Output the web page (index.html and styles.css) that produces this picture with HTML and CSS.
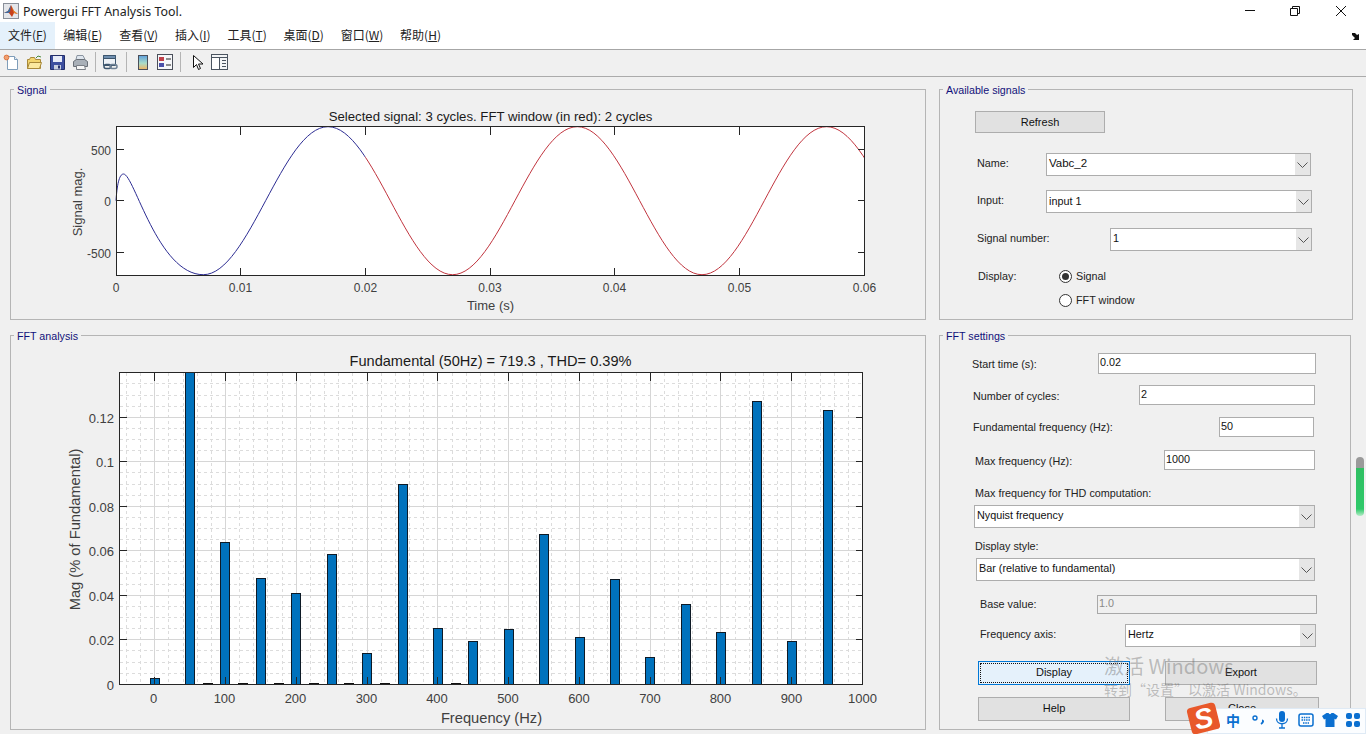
FILE: index.html
```html
<!DOCTYPE html>
<html lang="en">
<head>
<meta charset="utf-8">
<title>Powergui FFT Analysis Tool.</title>
<link rel="stylesheet" href="styles.css">
</head>
<body>
<div class="app">
  <header class="titlebar">
    <svg class="app-icon" width="16" height="16" viewBox="0 0 16 16"><rect x=".5" y=".5" width="15" height="15" fill="#e4e6ea" stroke="#8a8f99"/><path d="M1 10l4-2 3-6 3 6 4 3-4-1-2 4-3-4z" fill="#c8401c"/><path d="M1 10l4-2 3-6-1 7-2 1z" fill="#3a6ea5"/><path d="M8 2l3 6 4 3-4-1z" fill="#e88a2a"/></svg>
    <span class="title-text">Powergui FFT Analysis Tool.</span>
    <div class="win-buttons">
      <span class="win-btn win-min"><svg width="12" height="12" viewBox="0 0 12 12"><path d="M1 5.500h10" stroke="#111" fill="none"/></svg></span>
      <span class="win-btn"><svg width="12" height="12" viewBox="0 0 12 12"><path d="M1.500 3.500h7v7h-7zM3.500 3.500v-2h7v7h-2" stroke="#111" fill="none"/></svg></span>
      <span class="win-btn"><svg width="12" height="12" viewBox="0 0 12 12"><path d="M1 1l10 10M11 1L1 11" stroke="#111" fill="none"/></svg></span>
    </div>
  </header>

  <nav class="menubar">
    <span class="menu-item active">文件(<u>F</u>)</span>
    <span class="menu-item">编辑(<u>E</u>)</span>
    <span class="menu-item">查看(<u>V</u>)</span>
    <span class="menu-item">插入(<u>I</u>)</span>
    <span class="menu-item">工具(<u>T</u>)</span>
    <span class="menu-item">桌面(<u>D</u>)</span>
    <span class="menu-item">窗口(<u>W</u>)</span>
    <span class="menu-item">帮助(<u>H</u>)</span>
    <svg class="dock-arrow" width="9" height="8" viewBox="0 0 9 8"><path d="M0 0l3 0 2 2 2-1v6H1l2-2-3-3z" fill="#111"/></svg>
  </nav>

  <div class="toolbar">
    <span class="tool"><svg width="17" height="17" viewBox="0 0 17 17"><path d="M4.500 2.500h7l3 3v10h-10z" fill="#fff" stroke="#7f9db9"/><path d="M11.500 2.500v3h3" fill="#e8eef5" stroke="#7f9db9"/><circle cx="3.500" cy="3.500" r="2.400" fill="#f0a070" stroke="#d9652a" stroke-width=".8"/></svg></span>
    <span class="tool"><svg width="17" height="17" viewBox="0 0 17 17"><path d="M1.500 14.500v-9h2l1-2h4l1 2h5v9z" fill="#f3d56e" stroke="#a8893a"/><path d="M1.500 14.500l2-6h12l-2 6z" fill="#fbe9a0" stroke="#a8893a"/><path d="M10 4l2-2 3 1" fill="none" stroke="#4a8a3a"/></svg></span>
    <span class="tool"><svg width="17" height="17" viewBox="0 0 17 17"><path d="M1.500 1.500h14v14h-14z" fill="#3d4f9f" stroke="#232e6a"/><rect x="4" y="2" width="9" height="6" fill="#e8ecf8"/><rect x="5" y="11" width="7" height="4.500" fill="#c9cfdf"/><rect x="9" y="11.500" width="2" height="3" fill="#232e6a"/></svg></span>
    <span class="tool"><svg width="17" height="17" viewBox="0 0 17 17"><path d="M5 1.500h6l2 4H4z" fill="#dfe6ee" stroke="#8a94a0"/><path d="M1.500 7.500l3-2h8l3 2v5h-14z" fill="#a9b0b8" stroke="#6a7078"/><path d="M4.500 11.500h8l1 4h-9z" fill="#f6f6f6" stroke="#7a7f86"/></svg></span>
    <span class="tool-sep"></span>
    <span class="tool tool-link"><svg width="17" height="17" viewBox="0 0 17 17"><path d="M1.500 1.500h12v10h-12z" fill="#eef2f7" stroke="#3d566e"/><path d="M1.500 1.500h12v3h-12z" fill="#6f8fb0" stroke="#3d566e"/><rect x="2" y="10.500" width="7" height="4" rx="2" fill="none" stroke="#3d566e" stroke-width="1.500"/><rect x="8" y="10.500" width="7" height="4" rx="2" fill="none" stroke="#6f8295" stroke-width="1.500"/></svg></span>
    <span class="tool-sep sep-wide"></span>
    <span class="tool tool-colorbar"><svg width="12" height="17" viewBox="0 0 12 17"><defs><linearGradient id="cbar" x1="0" y1="0" x2="0" y2="1"><stop offset="0" stop-color="#5f9fdc"/><stop offset=".55" stop-color="#a9dcc8"/><stop offset="1" stop-color="#f2b35e"/></linearGradient></defs><rect x="1.500" y="1.500" width="9" height="14" fill="url(#cbar)" stroke="#4a4f5a"/></svg></span>
    <span class="tool"><svg width="16" height="16" viewBox="0 0 16 16"><rect x=".5" y=".5" width="15" height="15" fill="#f6f7f9" stroke="#4a4f5a"/><rect x="2" y="3" width="5" height="4" fill="#c0404a"/><rect x="2" y="9" width="5" height="4" fill="#4a50a8"/><path d="M9 5h5M9 11h5" stroke="#222"/></svg></span>
    <span class="tool-sep sep-end"></span>
    <span class="tool tool-cursor"><svg width="12" height="17" viewBox="0 0 12 17"><path d="M1.500 1.500v12l3-3 2 5 2-1-2-4.500h4.500z" fill="#fff" stroke="#111"/></svg></span>
    <span class="tool"><svg width="17" height="17" viewBox="0 0 17 17"><rect x=".5" y=".5" width="16" height="15" fill="#f3f5f7" stroke="#4a5460"/><path d="M.5 3.500h16" stroke="#4a5460"/><rect x="1" y="4" width="7" height="11" fill="#fff"/><path d="M8.500 3.500v12M11 6.500h4M11 9.500h4M11 12.500h4" stroke="#4a5460"/></svg></span>
  </div>

  <main class="workspace">
    <section class="panel panel-signal">
      <span class="panel-label">Signal</span>
      <svg class="plot" viewBox="11 90 914 229" width="914" height="229">
        <defs>
          <path id="wave" d="M116 200.700C117 186 119 174 123.500 174C134 174 158 274.700 203.300 274.700C248.700 274.700 282.600 126.700 328 126.700C373.400 126.700 407.200 274.700 452.600 274.700C498 274.700 531.900 126.700 577.300 126.700C622.700 126.700 656.600 274.700 702 274.700C747.400 274.700 781.200 126.700 826.600 126.700C872 126.700 905.900 274.700 951.300 274.700" fill="none"/>
          <clipPath id="clip-blue"><rect x="110" y="120" width="255.300" height="160"/></clipPath>
          <clipPath id="clip-red"><rect x="365.300" y="120" width="499" height="160"/></clipPath>
        </defs>
        <rect class="axes-bg" x="116.500" y="126.500" width="748" height="149"/>
        <use href="#wave" class="line-blue" clip-path="url(#clip-blue)"/>
        <use href="#wave" class="line-red" clip-path="url(#clip-red)"/>
        <rect class="axes-box" x="116.500" y="126.500" width="748" height="149"/>
        <path class="ticks" d="M116.500 149.500h7M116.500 200.500h7M116.500 252.500h7M864.500 149.500h-7M864.500 200.500h-7M864.500 252.500h-7M240.500 126.500v8M365.500 126.500v8M490.500 126.500v8M614.500 126.500v8M739.500 126.500v8M240.500 275.500v-8M365.500 275.500v-8M490.500 275.500v-8M614.500 275.500v-8M739.500 275.500v-8"/>
        <text class="tick-s end" x="111" y="155">500</text>
        <text class="tick-s end" x="111" y="206">0</text>
        <text class="tick-s end" x="111" y="258">-500</text>
        <text class="tick-s mid" x="116" y="292">0</text>
        <text class="tick-s mid" x="240.500" y="292">0.01</text>
        <text class="tick-s mid" x="365.500" y="292">0.02</text>
        <text class="tick-s mid" x="490" y="292">0.03</text>
        <text class="tick-s mid" x="614.500" y="292">0.04</text>
        <text class="tick-s mid" x="739.500" y="292">0.05</text>
        <text class="tick-s mid" x="864.500" y="292">0.06</text>
        <text class="plot-title-s mid" x="490.500" y="121">Selected signal: 3 cycles. FFT window (in red): 2 cycles</text>
        <text class="label-s mid" x="490.500" y="310">Time (s)</text>
        <text class="label-s mid" transform="translate(82 202) rotate(-90)">Signal mag.</text>
      </svg>
    </section>

    <section class="panel panel-avail">
      <span class="panel-label">Available signals</span>
      <button class="btn btn-refresh">Refresh</button>
      <div class="row row-name">
        <span class="lbl lbl-name">Name:</span>
        <div class="combo combo-name"><span class="combo-text big">Vabc_2</span><span class="combo-arrow"><svg width="11" height="6" viewBox="0 0 11 6"><path d="M.5 .5l5 5 5-5" fill="none" stroke="#555"/></svg></span></div>
      </div>
      <div class="row row-input">
        <span class="lbl lbl-name">Input:</span>
        <div class="combo combo-input"><span class="combo-text">input 1</span><span class="combo-arrow"><svg width="11" height="6" viewBox="0 0 11 6"><path d="M.5 .5l5 5 5-5" fill="none" stroke="#555"/></svg></span></div>
      </div>
      <div class="row row-number">
        <span class="lbl lbl-number">Signal number:</span>
        <div class="combo combo-number"><span class="combo-text">1</span><span class="combo-arrow"><svg width="11" height="6" viewBox="0 0 11 6"><path d="M.5 .5l5 5 5-5" fill="none" stroke="#555"/></svg></span></div>
      </div>
      <div class="row row-radio1">
        <span class="lbl lbl-display">Display:</span>
        <span class="radio on"></span><span class="radio-text">Signal</span>
      </div>
      <div class="row row-radio2">
        <span class="radio"></span><span class="radio-text">FFT window</span>
      </div>
    </section>

    <section class="panel panel-fft">
      <span class="panel-label">FFT analysis</span>
      <svg class="plot" viewBox="11 336 914 393" width="914" height="393">
        <rect class="axes-bg" x="119.500" y="372.500" width="743" height="312"/>
        <path class="grid-minor" d="M126.500 373V684M140.500 373V684M168.500 373V684M183.500 373V684M197.500 373V684M211.500 373V684M239.500 373V684M253.500 373V684M267.500 373V684M282.500 373V684M310.500 373V684M324.500 373V684M338.500 373V684M352.500 373V684M381.500 373V684M395.500 373V684M409.500 373V684M423.500 373V684M452.500 373V684M466.500 373V684M480.500 373V684M494.500 373V684M522.500 373V684M536.500 373V684M551.500 373V684M565.500 373V684M593.500 373V684M607.500 373V684M621.500 373V684M636.500 373V684M664.500 373V684M678.500 373V684M692.500 373V684M706.500 373V684M735.500 373V684M749.500 373V684M763.500 373V684M777.500 373V684M805.500 373V684M820.500 373V684M834.500 373V684M848.500 373V684"/>
        <path class="grid-minor" d="M120 673.500H862M120 662.500H862M120 650.500H862M120 628.500H862M120 617.500H862M120 606.500H862M120 584.500H862M120 573.500H862M120 561.500H862M120 539.500H862M120 528.500H862M120 517.500H862M120 495.500H862M120 484.500H862M120 472.500H862M120 450.500H862M120 439.500H862M120 428.500H862M120 406.500H862M120 395.500H862M120 383.500H862"/>
        <path class="grid-major" d="M154.500 373V684M225.500 373V684M296.500 373V684M367.500 373V684M437.500 373V684M508.500 373V684M579.500 373V684M650.500 373V684M720.500 373V684M791.500 373V684M120 639.500H862M120 595.500H862M120 550.500H862M120 506.500H862M120 461.500H862M120 417.500H862"/>
        <rect class="bar" x="150.500" y="678.500" width="9" height="6"/>
        <rect class="bar" x="185.500" y="372" width="9" height="312.500"/>
        <rect class="bar" x="220.500" y="542.500" width="9" height="142"/>
        <rect class="bar" x="256.500" y="578.500" width="9" height="106"/>
        <rect class="bar" x="291.500" y="593.500" width="9" height="91"/>
        <rect class="bar" x="327.500" y="554.500" width="9" height="130"/>
        <rect class="bar" x="362.500" y="653.500" width="9" height="31"/>
        <rect class="bar" x="398.500" y="484.500" width="9" height="200"/>
        <rect class="bar" x="433.500" y="628.500" width="9" height="56"/>
        <rect class="bar" x="468.500" y="641.500" width="9" height="43"/>
        <rect class="bar" x="504.500" y="629.500" width="9" height="55"/>
        <rect class="bar" x="539.500" y="534.500" width="9" height="150"/>
        <rect class="bar" x="575.500" y="637.500" width="9" height="47"/>
        <rect class="bar" x="610.500" y="579.500" width="9" height="105"/>
        <rect class="bar" x="645.500" y="657.500" width="9" height="27"/>
        <rect class="bar" x="681.500" y="604.500" width="9" height="80"/>
        <rect class="bar" x="716.500" y="632.500" width="9" height="52"/>
        <rect class="bar" x="752.500" y="401.500" width="9" height="283"/>
        <rect class="bar" x="787.500" y="641.500" width="9" height="43"/>
        <rect class="bar" x="823.500" y="410.500" width="9" height="274"/>
        <path class="stubs" d="M203 683.500h10M238 683.500h10M274 683.500h10M309 683.500h10M344 683.500h10M380 683.500h10M451 683.500h10"/>
        <rect class="axes-box" x="119.500" y="372.500" width="743" height="312"/>
        <path class="ticks" d="M119.500 639.500h7M119.500 595.500h7M119.500 550.500h7M119.500 506.500h7M119.500 461.500h7M119.500 417.500h7M862.500 639.500h-7M862.500 595.500h-7M862.500 550.500h-7M862.500 506.500h-7M862.500 461.500h-7M862.500 417.500h-7M154.500 372.500v8M225.500 372.500v8M296.500 372.500v8M367.500 372.500v8M437.500 372.500v8M508.500 372.500v8M579.500 372.500v8M650.500 372.500v8M720.500 372.500v8M791.500 372.500v8M154.500 684.500v-8M225.500 684.500v-8M296.500 684.500v-8M367.500 684.500v-8M437.500 684.500v-8M508.500 684.500v-8M579.500 684.500v-8M650.500 684.500v-8M720.500 684.500v-8M791.500 684.500v-8"/>
        <text class="tick-f end" x="114" y="690">0</text>
        <text class="tick-f end" x="114" y="645">0.02</text>
        <text class="tick-f end" x="114" y="601">0.04</text>
        <text class="tick-f end" x="114" y="556">0.06</text>
        <text class="tick-f end" x="114" y="512">0.08</text>
        <text class="tick-f end" x="114" y="467">0.1</text>
        <text class="tick-f end" x="114" y="423">0.12</text>
        <text class="tick-f mid" x="153.500" y="703">0</text>
        <text class="tick-f mid" x="224.500" y="703">100</text>
        <text class="tick-f mid" x="295.500" y="703">200</text>
        <text class="tick-f mid" x="366.500" y="703">300</text>
        <text class="tick-f mid" x="437" y="703">400</text>
        <text class="tick-f mid" x="508" y="703">500</text>
        <text class="tick-f mid" x="579" y="703">600</text>
        <text class="tick-f mid" x="650" y="703">700</text>
        <text class="tick-f mid" x="720.500" y="703">800</text>
        <text class="tick-f mid" x="791.500" y="703">900</text>
        <text class="tick-f mid" x="862.500" y="703">1000</text>
        <text class="plot-title-f mid" x="490.500" y="366">Fundamental (50Hz) = 719.3 , THD= 0.39%</text>
        <text class="label-f mid" x="491.500" y="723">Frequency (Hz)</text>
        <text class="label-f mid" transform="translate(80 529.500) rotate(-90)">Mag (% of Fundamental)</text>
      </svg>
    </section>

    <section class="panel panel-settings">
      <span class="panel-label">FFT settings</span>
      <div class="row row-start">
        <span class="lbl lbl-start">Start time (s):</span>
        <span class="field field-start">0.02</span>
      </div>
      <div class="row row-cycles">
        <span class="lbl lbl-cycles">Number of cycles:</span>
        <span class="field field-cycles">2</span>
      </div>
      <div class="row row-fund">
        <span class="lbl lbl-fund">Fundamental frequency (Hz):</span>
        <span class="field field-fund">50</span>
      </div>
      <div class="row row-maxf">
        <span class="lbl lbl-maxf">Max frequency (Hz):</span>
        <span class="field field-maxf">1000</span>
      </div>
      <div class="lbl lbl-block lbl-thd">Max frequency for THD computation:</div>
      <div class="combo combo-thd"><span class="combo-text">Nyquist frequency</span><span class="combo-arrow"><svg width="11" height="6" viewBox="0 0 11 6"><path d="M.5 .5l5 5 5-5" fill="none" stroke="#555"/></svg></span></div>
      <div class="lbl lbl-block lbl-style">Display style:</div>
      <div class="combo combo-style"><span class="combo-text">Bar (relative to fundamental)</span><span class="combo-arrow"><svg width="11" height="6" viewBox="0 0 11 6"><path d="M.5 .5l5 5 5-5" fill="none" stroke="#555"/></svg></span></div>
      <div class="row row-base">
        <span class="lbl lbl-base">Base value:</span>
        <span class="field field-base">1.0</span>
      </div>
      <div class="row row-axis">
        <span class="lbl lbl-axis">Frequency axis:</span>
        <div class="combo combo-axis"><span class="combo-text">Hertz</span><span class="combo-arrow"><svg width="11" height="6" viewBox="0 0 11 6"><path d="M.5 .5l5 5 5-5" fill="none" stroke="#555"/></svg></span></div>
      </div>
      <div class="btn-row btn-row-1">
        <button class="btn btn-action btn-focus"><span class="focus-ring">Display</span></button>
        <button class="btn btn-action">Export</button>
      </div>
      <div class="btn-row btn-row-2">
        <button class="btn btn-action">Help</button>
        <button class="btn btn-action btn-close">Close</button>
      </div>
    </section>
  </main>

  <div class="side-meter"></div>

  <div class="watermark">
    <div class="wm-big">激活 Windows</div>
    <div class="wm-small">转到“设置”以激活 Windows。</div>
  </div>

  <div class="ime">
    <span class="ime-logo"><span class="ime-s">S</span></span>
    <div class="ime-bar">
      <span class="ime-zh">中</span>
      <span class="ime-icon"><svg width="16" height="14" viewBox="0 0 16 14"><circle cx="4" cy="5" r="2" fill="none" stroke="#0a6fd0" stroke-width="1.400"/><path d="M11 7.500c1.500 0 1.500 2-1 3.500" fill="none" stroke="#0a6fd0" stroke-width="2"/></svg></span>
      <span class="ime-icon"><svg width="14" height="18" viewBox="0 0 14 18"><rect x="4" y="0" width="6" height="11" rx="3" fill="#0a6fd0"/><path d="M1.500 7.500c0 7 11 7 11 0M7 13v4M4 17h6" fill="none" stroke="#0a6fd0" stroke-width="1.300"/></svg></span>
      <span class="ime-icon"><svg width="16" height="14" viewBox="0 0 16 14"><rect x="1" y="1" width="14" height="12" rx="2" fill="none" stroke="#0a6fd0" stroke-width="1.500"/><path d="M3.500 4.500h9M3.500 7h9M5 10h6" stroke="#0a6fd0" stroke-width="1.400" stroke-dasharray="1.500 .8"/></svg></span>
      <span class="ime-icon"><svg width="16" height="14" viewBox="0 0 16 14"><path d="M4.500 0h2c.5 1.500 2.500 1.500 3 0h2L16 3l-2 3.500-1.500-.8V14h-9V5.700L2 6.500 0 3z" fill="#0a6fd0"/></svg></span>
      <span class="ime-icon"><svg width="14" height="14" viewBox="0 0 14 14"><rect width="6" height="6" rx="2" fill="#0a6fd0"/><rect x="8" width="6" height="6" rx="2" fill="#0a6fd0"/><rect y="8" width="6" height="6" rx="2" fill="#0a6fd0"/><rect x="8" y="8" width="6" height="6" rx="2" fill="#0a6fd0"/></svg></span>
    </div>
  </div>
</div>
</body>
</html>
```
FILE: styles.css
```css
html, body { margin: 0; padding: 0; }
body { font-family: "Liberation Sans", Arial, sans-serif; background: #f0f0f0; }
.app { position: relative; width: 1366px; height: 734px; overflow: hidden; background: #f0f0f0; }

.titlebar { display: flex; align-items: center; height: 22px; background: #fff; padding-left: 3px; box-sizing: border-box; }
.app-icon { flex: none; }
.title-text { margin-left: 4px; font: 12.400px "Noto Sans", "Open Sans", sans-serif; color: #222; }
.win-buttons { display: flex; margin-left: auto; padding-right: 2px; }
.win-btn { display: flex; justify-content: center; align-items: center; width: 46px; height: 20px; }
.win-min { width: 44px; }

.menubar { display: flex; align-items: stretch; height: 27px; box-sizing: content-box; background: #fff; border-bottom: 1px solid #a6a6a6; }
.menu-item { display: flex; align-items: center; padding: 0 8.400px 2px; font: 12px "Noto Sans CJK SC", "Liberation Sans", sans-serif; color: #222; white-space: pre; }
.menu-item.active { background: #e5f1fb; padding-left: 8px; padding-right: 8px; }
.dock-arrow { margin: 11px 5px 0 auto; }

.toolbar { display: flex; align-items: center; height: 26px; padding: 0 0 2px 3px; box-sizing: border-box; height: 27px; background: #f0f0f0; border-bottom: 1px solid #ababab; }
.tool { display: flex; flex: none; width: 23px; }
.tool-link { width: 24px; }
.tool-colorbar { width: 20px; }
.tool-cursor { width: 19px; }
.tool-sep { flex: none; width: 1px; height: 20px; background: #b4b4b4; margin-right: 6px; }
.sep-wide { margin-right: 10px; }
.sep-end { margin-right: 11px; }

.workspace { display: grid; grid-template-columns: 916px 414px; grid-template-rows: 231px 395px; column-gap: 13px; row-gap: 15px; padding: 12px 0 0 10px; }
.panel { position: relative; box-sizing: border-box; border: 1px solid #b5b5b5; }
.panel-settings { width: 412px; }
.panel-label { position: absolute; left: 3px; top: -6px; padding: 0 3px; background: #f0f0f0; font-size: 10.700px; line-height: 12px; color: #10107a; }
.plot { display: block; }
.axes-bg { fill: #fff; }
.axes-box { fill: none; stroke: #262626; stroke-width: 1; shape-rendering: crispEdges; }
.ticks { fill: none; stroke: #262626; stroke-width: 1; shape-rendering: crispEdges; }
.line-blue { fill: none; stroke: #2c2c92; stroke-width: 1; }
.line-red { fill: none; stroke: #c0343e; stroke-width: 1; }
.grid-major { fill: none; stroke: #d6d6d6; stroke-width: 1; shape-rendering: crispEdges; }
.grid-minor { fill: none; stroke: #dcdcdc; stroke-width: 1; stroke-dasharray: 3 3; shape-rendering: crispEdges; }
.bar { fill: #0072bd; stroke: #0e1a26; stroke-width: 1; shape-rendering: crispEdges; }
.stubs { fill: none; stroke: #111; stroke-width: 1; }
.end { text-anchor: end; }
.mid { text-anchor: middle; }
.tick-s { font-size: 12px; fill: #404040; }
.tick-f { font-size: 13px; fill: #404040; }
.plot-title-s { font-size: 13.200px; fill: #1a1a1a; }
.label-s { font-size: 13px; fill: #404040; }
.plot-title-f { font-size: 14.600px; fill: #1a1a1a; }
.label-f { font-size: 14.700px; fill: #404040; }

.btn { display: block; box-sizing: border-box; margin: 0; padding: 0; background: #e1e1e1; border: 1px solid #adadad; font: 11px "Liberation Sans", sans-serif; color: #111; }
.btn-refresh { width: 130px; height: 22px; margin: 21px 0 0 35px; }
.row { display: flex; align-items: center; }
.lbl { flex: none; font-size: 10.800px; color: #222; white-space: nowrap; }
.lbl-block { line-height: 14px; }
.combo { display: flex; box-sizing: border-box; height: 23px; background: #fff; border: 1px solid #adadad; flex: none; }
.combo-text { flex: 1; padding-left: 2px; font-size: 10.800px; line-height: 19px; color: #111; white-space: nowrap; }
.combo-input .combo-text { line-height: 21px; }
.combo-text.big { font-size: 11.500px; }
.combo-arrow { display: flex; align-items: center; justify-content: center; flex: none; width: 15px; background: #e6e6e6; }
.field { flex: none; box-sizing: border-box; padding: 1px 0 0 1px; background: #fff; border: 1px solid #adadad; font-size: 10.800px; line-height: 14px; color: #111; }

.row-name { margin: 20px 0 0 37px; }
.row-input { margin: 14px 0 0 37px; }
.row-number { margin: 15px 0 0 37px; }
.lbl-name { width: 69px; padding-bottom: 4px; }
.lbl-number { width: 133px; padding-bottom: 4px; }
.combo-name { width: 265px; }
.combo-input { width: 266px; }
.combo-number { width: 202px; }
.row-radio1 { margin: 17px 0 0 38px; height: 16px; }
.row-radio2 { margin: 8px 0 0 119px; height: 16px; }
.lbl-display { width: 81px; }
.radio { position: relative; flex: none; box-sizing: border-box; width: 13px; height: 13px; border: 1px solid #333; border-radius: 50%; background: #fff; }
.radio.on::after { content: ""; position: absolute; left: 2px; top: 2px; width: 7px; height: 7px; border-radius: 50%; background: #333; }
.radio-text { margin-left: 4px; font-size: 10.800px; color: #222; }

.lbl-start { width: 126px; margin-left: 32px; padding-top: 1px; }
.lbl-cycles { width: 166px; margin-left: 33px; padding-top: 1px; }
.lbl-fund { width: 246px; margin-left: 33px; }
.lbl-maxf { width: 189px; margin-left: 35px; padding-top: 1px; }
.row-start { margin-top: 17px; }
.row-cycles { margin-top: 11px; }
.row-fund { margin-top: 12px; }
.row-maxf { margin-top: 13px; }
.field-start { width: 218px; height: 21px; }
.field-cycles { width: 176px; height: 20px; }
.field-fund { width: 95px; height: 20px; }
.field-maxf { width: 151px; height: 20px; }
.lbl-thd { margin: 16px 0 0 35px; }
.combo-thd { width: 341px; margin: 5px 0 0 34px; }
.lbl-style { margin: 11px 0 0 35px; }
.combo-style { width: 339px; margin: 5px 0 0 36px; }
.row-base { margin: 14px 0 0 40px; }
.lbl-base { width: 117px; padding-bottom: 1px; }
.field-base { width: 220px; height: 19px; padding-top: 0; background: #f0f0f0; border-color: #a8a8a8; color: #888; }
.row-axis { margin: 10px 0 0 40px; }
.lbl-axis { width: 145px; padding-bottom: 3px; }
.combo-axis { width: 191px; }
.btn-row { display: flex; column-gap: 35px; margin-left: 38px; }
.btn-row-1 { margin-top: 14px; }
.btn-row-2 { margin-top: 12px; }
.btn-action { width: 152px; height: 24px; padding-bottom: 2px; }
.btn-close { width: 154px; }
.btn-focus { background: #e5f1fb; border-color: #0078d7; padding: 1px; }
.focus-ring { display: flex; align-items: center; justify-content: center; height: 100%; box-sizing: border-box; padding-bottom: 2px; border: 1px dotted #111; }

.side-meter { position: absolute; left: 1356px; top: 457px; width: 8px; height: 59px; box-sizing: border-box; border-radius: 4px; background: linear-gradient(#9a9a9a 0, #9a9a9a 11px, #2fbf62 11px, #2fc96a 52px, #b5ecc8 100%); }

.watermark { position: absolute; left: 1104px; top: 654px; color: rgba(110, 110, 110, .42); font-family: "Noto Sans CJK SC", "Noto Sans", sans-serif; pointer-events: none; white-space: nowrap; }
.wm-big { font-size: 20px; line-height: 24px; }
.wm-small { font-size: 14px; line-height: 22px; }

.ime { position: absolute; left: 1188px; top: 703px; display: flex; width: 178px; height: 31px; }
.ime-logo { position: absolute; left: 1px; top: 2px; display: flex; align-items: center; justify-content: center; width: 29px; height: 27px; border-radius: 4px; background: #e8582a; transform: rotate(-14deg); z-index: 1; }
.ime-s { font: italic 900 28px/27px "Liberation Sans", sans-serif; color: #fff; }
.ime-bar { display: flex; align-items: center; box-sizing: border-box; width: 159px; height: 26px; margin: 5px 0 0 19px; padding: 0 0 2px 18px; background: #fbfdff; border: 1px solid #dfeaf5; }
.ime-zh { width: 21px; font: 700 14px "Noto Sans CJK SC", sans-serif; color: #0a6fd0; }
.ime-icon { display: flex; justify-content: center; width: 24px; }
```
